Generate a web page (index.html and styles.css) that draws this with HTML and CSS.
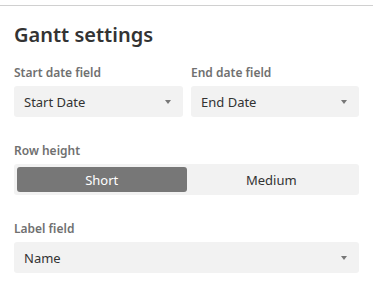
FILE: index.html
```html
<!doctype html>
<html>
<head>
<meta charset="utf-8">
<title>Gantt settings</title>
<link rel="stylesheet" href="styles.css">
</head>
<body>
<div class="panel">
    <h2 class="title">Gantt settings</h2>

    <div class="row">
        <div class="field">
            <div class="label">Start date field</div>
            <div class="select">
                <span>Start Date</span>
                <i class="caret"></i>
            </div>
        </div>
        <div class="field">
            <div class="label">End date field</div>
            <div class="select">
                <span>End Date</span>
                <i class="caret"></i>
            </div>
        </div>
    </div>

    <div class="field">
        <div class="label">Row height</div>
        <div class="segment">
            <div class="seg on">Short</div>
            <div class="seg">Medium</div>
        </div>
    </div>

    <div class="field">
        <div class="label">Label field</div>
        <div class="select">
            <span>Name</span>
            <i class="caret"></i>
        </div>
    </div>
</div>
</body>
</html>
```

FILE: styles.css
```css
body{
    margin:0;
    background:#fff;
    font-family:"Noto Sans","Open Sans",sans-serif;
    color:#333;
    }
.panel{
    margin-top:5px;
    border-top:1px solid #d0d0d0;
    padding:16px 14px 0 14px;
    width:345px;
    }
.title{
    margin:0 0 17px;
    font-size:20px;
    font-weight:600;
    line-height:26px;
    color:#333;
    }
.row{
    display:grid;
    grid-template-columns:169px 168px;
    gap:8px;
    }
.field{
    margin-bottom:26px;
    }
.label{
    font-size:12px;
    font-weight:600;
    color:#707070;
    line-height:16px;
    margin-bottom:5px;
    }
.select{
    height:31px;
    background:#f2f2f2;
    border-radius:3px;
    display:flex;
    align-items:center;
    justify-content:space-between;
    padding:0 10px;
    font-size:13px;
    color:#333;
    }
.caret{
    width:0;
    height:0;
    border-left:3px solid transparent;
    border-right:3px solid transparent;
    border-top:4px solid #777;
    margin-right:2px;
    }
.segment{
    height:31px;
    background:#f2f2f2;
    border-radius:3px;
    display:flex;
    padding:3px;
    box-sizing:border-box;
    }
.seg{
    flex:1;
    display:flex;
    align-items:center;
    justify-content:center;
    font-size:13px;
    color:#333;
    border-radius:3px;
    }
.seg.on{
    background:#777;
    color:#fff;
    }
```
